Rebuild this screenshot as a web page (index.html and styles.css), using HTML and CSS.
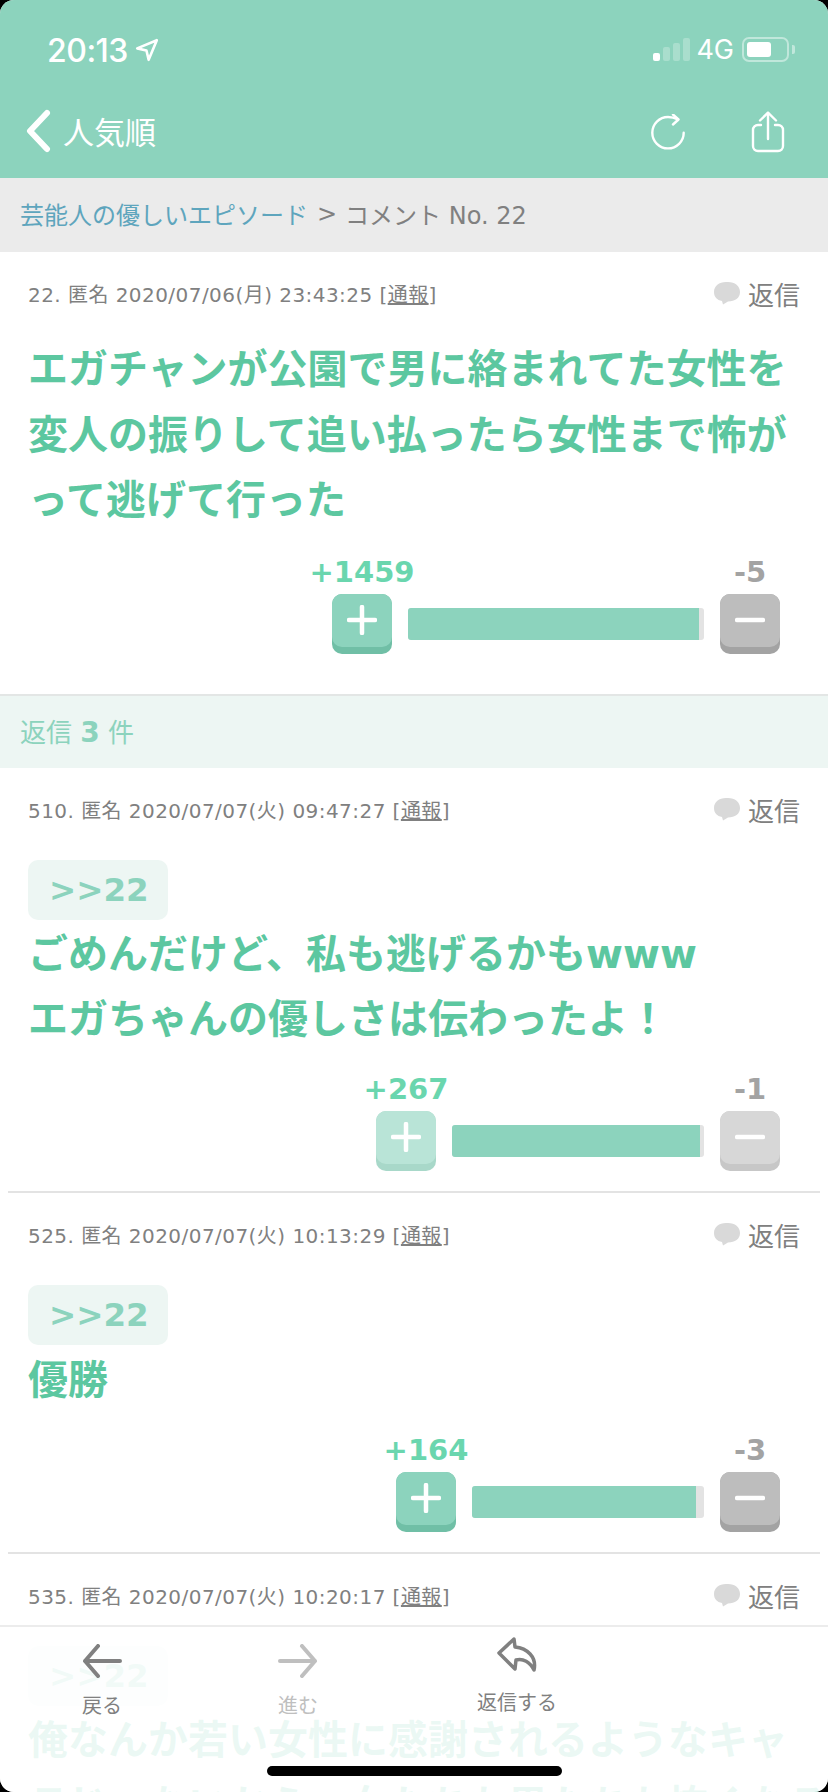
FILE: index.html
```html
<!DOCTYPE html>
<html lang="ja">
<head>
    <meta charset="UTF-8">
    <meta name="viewport" content="width=device-width, initial-scale=1.0">
    <title>コメント No. 22</title>
    <link rel="stylesheet" href="styles.css">
</head>
<body>
<div class="screen">
    <header class="app-header">
        <div class="status-bar">
            <div class="status-left">
                <span class="status-time">20:13</span>
                <svg class="icon-location" width="24" height="24" viewBox="0 0 22 22"><path d="M20 2 L2 9.500 L10.500 11.500 L12.500 20 Z"/></svg>
            </div>
            <div class="status-right">
                <div class="signal">
                    <span class="signal-bar signal-on s1"></span>
                    <span class="signal-bar s2"></span>
                    <span class="signal-bar s3"></span>
                    <span class="signal-bar s4"></span>
                </div>
                <span class="network">4G</span>
                <div class="battery"><span class="battery-level"></span></div>
                <span class="battery-nub"></span>
            </div>
        </div>
        <nav class="nav-bar">
            <div class="nav-left">
                <svg class="icon-chevron" width="26" height="44" viewBox="0 0 26 44"><path d="M22 4 L5 22 L22 40"/></svg>
                <span class="nav-title">人気順</span>
            </div>
            <div class="nav-right">
                <svg class="icon-line" width="34" height="36" viewBox="0 0 34 36"><path d="M27 5.500 C24 4 20.500 3 17 3 A15.700 15.700 0 1 0 32.700 18.700"/><path d="M22 0.500 L27.500 5.500 L22 10.500"/></svg>
                <svg class="icon-line" width="34" height="42" viewBox="0 0 34 42"><path d="M17 2 V28"/><path d="M9 9.500 L17 1.700 L25 9.500"/><path d="M10 14 H7 A5 5 0 0 0 2 19 V35 A5 5 0 0 0 7 40 H27 A5 5 0 0 0 32 35 V19 A5 5 0 0 0 27 14 H24"/></svg>
            </div>
        </nav>
    </header>

    <div class="breadcrumb">
        <a class="breadcrumb-link">芸能人の優しいエピソード</a>
        <span class="breadcrumb-sep">&gt;</span>
        <span>コメント No. 22</span>
    </div>

    <article class="post post-main">
        <div class="post-meta">
            <span class="meta-text">22. 匿名 2020/07/06(月) 23:43:25 [<u>通報</u>]</span>
            <span class="reply-link">
                <svg class="bubble" width="26" height="23" viewBox="0 0 26 23"><path d="M12 0 H14 C21 0 26 4 26 10 C26 16 21 19.500 14 19.500 L9 22.500 L8 19 C3 18 0 15 0 10 C0 4 5 0 12 0 Z"/></svg>
                返信
            </span>
        </div>
        <p class="post-body">エガチャンが公園で男に絡まれてた女性を<br>変人の振りして追い払ったら女性まで怖が<br>って逃げて行った</p>
        <div class="vote">
            <div class="vote-side">
                <span class="count count-plus">+1459</span>
                <button class="vote-btn btn-plus"><span class="btn-face"><svg width="30" height="30" viewBox="0 0 30 30"><path d="M15 2 V28 M2 15 H28"/></svg></span></button>
            </div>
            <div class="bar" style="width: 296px"><div class="bar-fill" style="width: 291px"></div></div>
            <div class="vote-side">
                <span class="count count-minus">-5</span>
                <button class="vote-btn btn-minus"><span class="btn-face"><svg width="30" height="30" viewBox="0 0 30 30"><path d="M2 15 H28"/></svg></span></button>
            </div>
        </div>
    </article>

    <div class="reply-count">返信 <b>3</b> 件</div>

    <article class="post post-reply">
        <div class="post-meta">
            <span class="meta-text">510. 匿名 2020/07/07(火) 09:47:27 [<u>通報</u>]</span>
            <span class="reply-link">
                <svg class="bubble" width="26" height="23" viewBox="0 0 26 23"><path d="M12 0 H14 C21 0 26 4 26 10 C26 16 21 19.500 14 19.500 L9 22.500 L8 19 C3 18 0 15 0 10 C0 4 5 0 12 0 Z"/></svg>
                返信
            </span>
        </div>
        <div class="anchor">&gt;&gt;22</div>
        <p class="post-body">ごめんだけど、私も逃げるかもwww<br>エガちゃんの優しさは伝わったよ！</p>
        <div class="vote">
            <div class="vote-side">
                <span class="count count-plus">+267</span>
                <button class="vote-btn btn-plus is-faded"><span class="btn-face"><svg width="30" height="30" viewBox="0 0 30 30"><path d="M15 2 V28 M2 15 H28"/></svg></span></button>
            </div>
            <div class="bar" style="width: 252px"><div class="bar-fill" style="width: 248px"></div></div>
            <div class="vote-side">
                <span class="count count-minus">-1</span>
                <button class="vote-btn btn-minus is-faded"><span class="btn-face"><svg width="30" height="30" viewBox="0 0 30 30"><path d="M2 15 H28"/></svg></span></button>
            </div>
        </div>
    </article>

    <article class="post post-reply">
        <div class="post-meta">
            <span class="meta-text">525. 匿名 2020/07/07(火) 10:13:29 [<u>通報</u>]</span>
            <span class="reply-link">
                <svg class="bubble" width="26" height="23" viewBox="0 0 26 23"><path d="M12 0 H14 C21 0 26 4 26 10 C26 16 21 19.500 14 19.500 L9 22.500 L8 19 C3 18 0 15 0 10 C0 4 5 0 12 0 Z"/></svg>
                返信
            </span>
        </div>
        <div class="anchor">&gt;&gt;22</div>
        <p class="post-body post-body-short">優勝</p>
        <div class="vote">
            <div class="vote-side">
                <span class="count count-plus">+164</span>
                <button class="vote-btn btn-plus"><span class="btn-face"><svg width="30" height="30" viewBox="0 0 30 30"><path d="M15 2 V28 M2 15 H28"/></svg></span></button>
            </div>
            <div class="bar" style="width: 232px"><div class="bar-fill" style="width: 224px"></div></div>
            <div class="vote-side">
                <span class="count count-minus">-3</span>
                <button class="vote-btn btn-minus"><span class="btn-face"><svg width="30" height="30" viewBox="0 0 30 30"><path d="M2 15 H28"/></svg></span></button>
            </div>
        </div>
    </article>

    <article class="post post-reply">
        <div class="post-meta">
            <span class="meta-text">535. 匿名 2020/07/07(火) 10:20:17 [<u>通報</u>]</span>
            <span class="reply-link">
                <svg class="bubble" width="26" height="23" viewBox="0 0 26 23"><path d="M12 0 H14 C21 0 26 4 26 10 C26 16 21 19.500 14 19.500 L9 22.500 L8 19 C3 18 0 15 0 10 C0 4 5 0 12 0 Z"/></svg>
                返信
            </span>
        </div>
        <div class="anchor">&gt;&gt;22</div>
        <p class="post-body">俺なんか若い女性に感謝されるようなキャ<br>ラじゃないから、女たちも男たちも怖くなる</p>
    </article>

    <footer class="toolbar">
        <div class="tool tool-back">
            <svg class="icon-tool" width="40" height="34" viewBox="0 0 40 34"><path d="M38 17 H3 M16 2 L3 17 L16 32"/></svg>
            <span>戻る</span>
        </div>
        <div class="tool tool-forward is-disabled">
            <svg class="icon-tool" width="40" height="34" viewBox="0 0 40 34"><path d="M2 17 H37 M24 2 L37 17 L24 32"/></svg>
            <span>進む</span>
        </div>
        <div class="tool tool-reply">
            <svg class="icon-reply" width="42" height="36" viewBox="0 0 42 36"><path d="M18 3 L3 17 L19 33 L20 24 C27 22 34 26 38 34 C41 21 31 12 19 11 Z"/></svg>
            <span>返信する</span>
        </div>
    </footer>
    <div class="home-indicator"></div>
</div>
</body>
</html>
```

FILE: styles.css
```css
* {
    box-sizing: border-box;
}
body {
    margin: 0;
    background: #000;
    font-family: "DejaVu Sans", "Noto Sans CJK JP", sans-serif;
}
.screen {
    position: relative;
    width: 828px;
    height: 1792px;
    overflow: hidden;
    background: #fff;
    border-radius: 14px;
}

/* header */
.app-header {
    height: 178px;
    background: #8cd3bd;
    color: #fff;
}
.status-bar {
    display: flex;
    justify-content: space-between;
    align-items: center;
    height: 100px;
    padding: 0 33px 0 47px;
    font-family: Inter, sans-serif;
}
.status-left {
    display: flex;
    align-items: center;
    gap: 7px;
}
.status-time {
    font-size: 32px;
    font-weight: 500;
    letter-spacing: -0.5px;
}
.icon-location path {
    fill: none;
    stroke: #fff;
    stroke-width: 2.4;
    stroke-linejoin: round;
}
.status-right {
    display: flex;
    align-items: center;
    margin-top: -2px;
}
.signal {
    display: flex;
    align-items: flex-end;
    gap: 3px;
    height: 23px;
    margin-right: 6px;
}
.signal-bar {
    width: 7px;
    border-radius: 2px;
    background: rgba(255, 255, 255, .25);
}
.signal-on {
    background: #fff;
}
.s1 { height: 8px; }
.s2 { height: 14px; }
.s3 { height: 18px; }
.s4 { height: 23px; }
.network {
    font-size: 27px;
    margin-right: 8px;
}
.battery {
    width: 47px;
    height: 25px;
    padding: 3px;
    border: 2px solid rgba(255, 255, 255, .45);
    border-radius: 7px;
}
.battery-level {
    display: block;
    width: 24px;
    height: 100%;
    background: #fff;
    border-radius: 3px;
}
.battery-nub {
    width: 3px;
    height: 9px;
    margin-left: 3px;
    background: rgba(255, 255, 255, .45);
    border-radius: 0 2px 2px 0;
}
.nav-bar {
    display: flex;
    justify-content: space-between;
    align-items: center;
    height: 62px;
    padding: 0 43px 0 25px;
}
.nav-left {
    display: flex;
    align-items: center;
    gap: 12px;
}
.nav-title {
    padding-top: 3px;
    font-size: 31px;
    line-height: 44px;
}
.nav-right {
    display: flex;
    align-items: center;
    gap: 66px;
    margin-top: 2px;
}
.icon-chevron path {
    fill: none;
    stroke: #fff;
    stroke-width: 6;
    stroke-linecap: round;
    stroke-linejoin: round;
}
.icon-line path {
    fill: none;
    stroke: #fff;
    stroke-width: 2.4;
    stroke-linecap: round;
    stroke-linejoin: round;
}

/* breadcrumb */
.breadcrumb {
    display: flex;
    align-items: center;
    height: 74px;
    padding: 0 0 3px 20px;
    background: #ebebeb;
    color: #808080;
    font-size: 24px;
}
.breadcrumb-link {
    color: #5ea5bd;
}
.breadcrumb-sep {
    margin: 0 8px 0 9px;
}

/* posts */
.post {
    padding: 0 28px;
}
.post-main {
    padding-top: 21px;
    padding-bottom: 40px;
    border-bottom: 2px solid #e3e6e5;
}
.post-reply {
    position: relative;
    padding-top: 22px;
    padding-bottom: 20px;
}
.post-reply:not(:last-of-type)::after {
    content: "";
    position: absolute;
    left: 8px;
    right: 8px;
    bottom: -2px;
    height: 2px;
    background: #e3e3e3;
}
.post-reply + .post-reply {
    margin-top: 2px;
}
.post-meta {
    display: flex;
    justify-content: space-between;
    align-items: center;
    height: 40px;
    color: #808080;
    font-size: 20px;
}
.meta-text {
    letter-spacing: .45px;
}
.reply-link {
    display: flex;
    align-items: center;
    gap: 8px;
    font-size: 26px;
}
.bubble path {
    fill: #d9d9d9;
}
.post-body {
    margin: 0;
    padding-top: 2px;
    color: #5cc7a0;
    font-size: 40px;
    font-weight: 700;
    line-height: 65.500px;
    white-space: nowrap;
}
.post-main .post-body {
    margin-top: 22px;
}
.post-main .vote {
    margin-top: 20px;
}
.post-body-short {
    line-height: 67px;
}
.anchor {
    display: inline-block;
    height: 60px;
    margin-top: 30px;
    padding: 0 19px 0 21px;
    background: #edf6f3;
    border-radius: 10px;
    color: #8cd3bd;
    font-size: 32.500px;
    font-weight: 700;
    line-height: 60px;
    vertical-align: top;
}

/* votes */
.vote {
    display: flex;
    justify-content: flex-end;
    align-items: flex-end;
    margin-top: 18px;
    padding-right: 20px;
}
.vote-side {
    display: flex;
    flex-direction: column;
    align-items: center;
    width: 60px;
    gap: 4px;
}
.count {
    font-size: 29px;
    font-weight: 700;
    line-height: 36px;
    white-space: nowrap;
}
.count-plus {
    color: #6ad6ae;
}
.count-minus {
    color: #a3a3a3;
}
.vote-btn {
    display: flex;
    align-items: flex-start;
    width: 60px;
    height: 60px;
    padding: 0;
    border: none;
    border-radius: 10px;
}
.btn-face {
    display: flex;
    justify-content: center;
    align-items: center;
    width: 100%;
    height: 53px;
    border-radius: 10px;
}
.btn-face path {
    fill: none;
    stroke: #fff;
    stroke-width: 4.500;
    stroke-linecap: round;
}
.btn-plus {
    background: #70bfa6;
}
.btn-plus .btn-face {
    background: #8cd3bd;
}
.btn-minus {
    background: #a3a3a3;
}
.btn-minus .btn-face {
    background: #bdbdbd;
}
.is-faded {
    opacity: .6;
}
.bar {
    height: 32px;
    margin: 0 16px 14px;
    background: #e3e3e3;
    border-radius: 3px;
    overflow: hidden;
}
.bar-fill {
    height: 100%;
    background: #8cd3bd;
}

.reply-count {
    height: 72px;
    padding-left: 20px;
    background: #edf6f3;
    color: #8cd3bd;
    font-size: 26px;
    line-height: 74px;
}
.reply-count b {
    font-size: 28px;
}

/* bottom toolbar, sits over the list */
.toolbar {
    position: absolute;
    left: 0;
    right: 0;
    top: 1625px;
    bottom: 0;
    display: flex;
    background: rgba(255, 255, 255, .88);
    border-top: 2px solid #ececec;
    color: #808080;
    font-size: 20px;
}
.tool {
    display: flex;
    flex-direction: column;
    align-items: center;
}
.tool-back {
    width: 204px;
    padding-top: 17px;
}
.tool-forward {
    width: 188px;
    padding-top: 17px;
}
.tool-reply {
    width: 250px;
    padding-top: 9px;
}
.tool span {
    margin-top: 12px;
    line-height: 32px;
}
.tool-reply span {
    margin-top: 15px;
}
.is-disabled {
    opacity: .5;
}
.icon-tool path {
    fill: none;
    stroke: #808080;
    stroke-width: 4;
    stroke-linecap: round;
    stroke-linejoin: round;
}
.icon-reply path {
    fill: none;
    stroke: #808080;
    stroke-width: 3.500;
    stroke-linejoin: round;
}
.home-indicator {
    position: absolute;
    left: 267px;
    bottom: 16px;
    width: 295px;
    height: 10px;
    background: #000;
    border-radius: 5px;
}
```
